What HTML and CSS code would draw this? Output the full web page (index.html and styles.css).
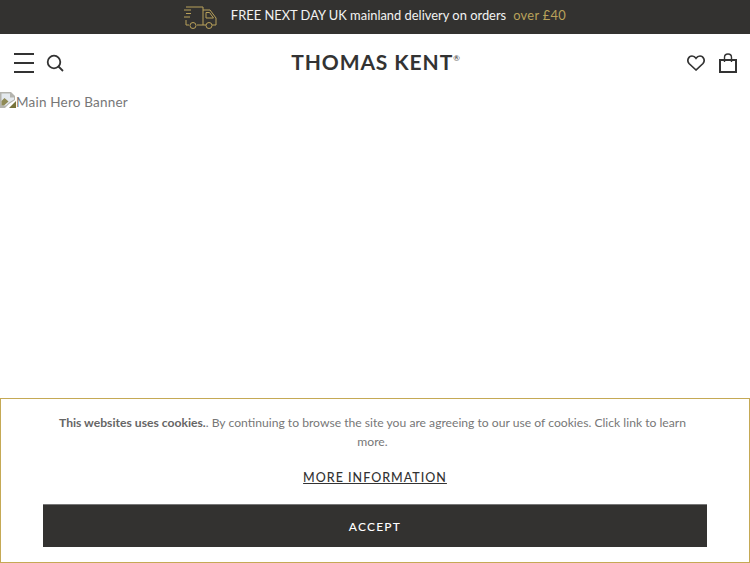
FILE: index.html

```html
<!DOCTYPE html>
<html lang="en">
<head>
  <meta charset="UTF-8" />
  <title>Thomas Kent</title>
  <link rel="stylesheet" href="styles.css">
</head>
<body>
  <div class="topbar">
    <svg class="truck" width="34" height="24" viewBox="0 0 34 24" fill="none" stroke="#b9a15a" stroke-width="1">
      <path d="M1 5h7M3 8.500h5M1 12h6"/>
      <path d="M3 2h17v18h-6M6 20H3v-5"/>
      <path d="M20 5h7l6 8v7h-4M20 20h3"/>
      <path d="M23 7.500h3.500l4 5.500H23z"/>
      <circle cx="10" cy="20.500" r="3"/>
      <circle cx="26" cy="20.500" r="3"/>
    </svg>
    <span class="topbar-text">FREE NEXT DAY UK mainland delivery on orders</span>
    <span class="topbar-gold">over £40</span>
  </div>

  <div class="navbar">
    <div class="nav-left">
      <svg width="20" height="20" viewBox="0 0 20 20" stroke="#333" stroke-width="2">
        <path d="M0 1h20M0 10h20M0 19h20"/>
      </svg>
      <svg width="18" height="18" viewBox="0 0 18 18" fill="none" stroke="#333" stroke-width="1.800">
        <circle cx="8" cy="8" r="6.300"/>
        <path d="M12.500 12.500l4.500 4.500"/>
      </svg>
    </div>
    <div class="logo">THOMAS KENT<sup>®</sup></div>
    <div class="nav-right">
      <svg width="18" height="16" viewBox="0 0 18 16" fill="none" stroke="#333" stroke-width="1.700">
        <path d="M9 15L2 8.500C-.5 5.500 1.500 1 5 1c1.800 0 3 .8 4 2.300C10 1.800 11.200 1 13 1c3.500 0 5.500 4.500 3 7.500z"/>
      </svg>
      <svg width="18" height="20" viewBox="0 0 18 20" fill="none" stroke="#333" stroke-width="2">
        <path d="M1 7h16v12H1z"/>
        <path d="M5.500 9V4.500C5.500 2.500 7 1 9 1s3.500 1.500 3.500 3.500V9" stroke-width="1.400"/>
      </svg>
    </div>
  </div>

  <div class="hero">
    <svg class="broken" width="16" height="16" viewBox="0 0 16 16">
      <path d="M0 0h11l4 4v4l-6 4-4 4H0z" fill="#b4b4ae"/>
      <path d="M1.500 1.500h8.500v4h4v2l-5 3-3 3H1.500z" fill="#e4e9ee"/>
      <path d="M1.500 13.500V9l3-3 4 3.500-4.500 4z" fill="#8f8a55"/>
      <path d="M9 16l7-7v7z" fill="#77733a"/>
    </svg>
    <span>Main Hero Banner</span>
  </div>

  <div class="cookie">
    <p class="cookie-text"><strong>This websites uses cookies.</strong>. By continuing to browse the site you are agreeing to our use of cookies. Click link to learn more.</p>
    <a class="cookie-link" href="#">MORE INFORMATION</a>
    <button class="cookie-btn">ACCEPT</button>
  </div>
</body>
</html>
```

FILE: styles.css

```css
html, body {
  margin: 0;
  padding: 0;
  height: 563px;
  overflow: hidden;
}
body {
  font-family: Lato, "Open Sans", sans-serif;
  background: white;
  color: #333;
  display: flex;
  flex-direction: column;
}
.topbar {
  background: #333230;
  height: 34px;
  box-sizing: border-box;
  flex: none;
  display: flex;
  align-items: center;
  justify-content: center;
  padding: 0 1px 4px 0;
  font-size: 12.900px;
  color: #f2f2f2;
}
.truck {
  margin: 3px 14px 0 0;
}
.topbar-gold {
  color: #b9a15a;
  margin-left: 7px;
  letter-spacing: 0.3px;
}
.navbar {
  height: 58px;
  flex: none;
  display: flex;
  align-items: center;
  justify-content: space-between;
  padding: 0 13px 0 14px;
}
.nav-left, .nav-right {
  display: flex;
  align-items: center;
  width: 65px;
}
.nav-left {
  gap: 12px;
}
.nav-right {
  justify-content: flex-end;
  gap: 14px;
}
.logo {
  font-size: 21px;
  font-weight: 700;
  letter-spacing: 0.900px;
  line-height: 24px;
  padding-bottom: 3px;
  color: #333;
  white-space: nowrap;
}
.logo sup {
  font-size: 8px;
  font-weight: 400;
  vertical-align: 9px;
  line-height: 0;
  letter-spacing: 0;
}
.hero {
  flex: 1;
  font-size: 13.500px;
  letter-spacing: 0.2px;
  color: #777;
  line-height: 20px;
  display: flex;
  align-items: flex-start;
}
.broken {
  flex: none;
}
.cookie {
  flex: none;
  height: 165px;
  box-sizing: border-box;
  border: 1px solid #c5a955;
  display: flex;
  flex-direction: column;
  align-items: center;
  padding: 14px 42px 14px;
}
.cookie-text {
  margin: 0 5px 0 0;
  width: 640px;
  text-align: center;
  font-size: 12.150px;
  line-height: 19px;
  color: #777;
}
.cookie-text strong {
  color: #666;
}
.cookie-link {
  margin-top: 18px;
  font-size: 12.500px;
  line-height: 17px;
  font-weight: 500;
  letter-spacing: 1px;
  color: #333;
}
.cookie-btn {
  margin-top: 18px;
  width: 100%;
  height: 43px;
  flex: none;
  background: #333230;
  border: 0;
  border-top: 1px solid #777;
  color: white;
  font-family: inherit;
  font-size: 12px;
  font-weight: 500;
  letter-spacing: 1.200px;
}
```
